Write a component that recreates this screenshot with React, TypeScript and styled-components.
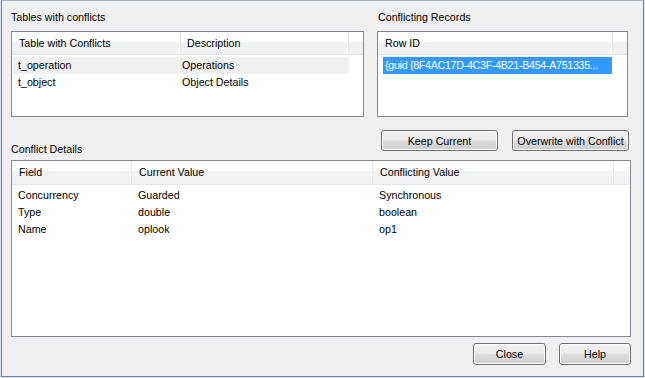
import styled, { createGlobalStyle } from "styled-components";

const GlobalStyle = createGlobalStyle`
  html, body {
    margin: 0;
    padding: 0;
    background: #dce7f5;
  }
  body {
    font-family: "Liberation Sans", Arial, sans-serif;
    font-size: 10.7px;
    color: #000;
  }
`;

const Frame = styled.div`
  width: 645px;
  height: 378px;
  padding: 0 1px 1px 1px;
  box-sizing: border-box;
`;

const Window = styled.div`
  width: 100%;
  height: 100%;
  box-sizing: border-box;
  background: #f0f0f0;
  border: 1px solid #6e7f98;
  border-top-color: #a9b3c2;
  padding: 10px 0 0 9px;
  display: flex;
  flex-direction: column;
`;

const TopRow = styled.div`
  display: flex;
  gap: 13px;
`;

const Group = styled.div<{ $w: number }>`
  width: ${(p) => p.$w}px;
  display: flex;
  flex-direction: column;
`;

const GroupLabel = styled.div<{ $indent?: number }>`
  height: 13px;
  line-height: 13px;
  margin-bottom: 7px;
  padding-left: ${(p) => p.$indent ?? 0}px;
  white-space: nowrap;
`;

const ListBox = styled.div<{ $w?: number; $h: number }>`
  width: ${(p) => (p.$w ? `${p.$w}px` : "100%")};
  height: ${(p) => p.$h}px;
  box-sizing: border-box;
  background: #fff;
  border: 1px solid #828790;
  overflow: hidden;
`;

const Header = styled.div<{ $h?: number }>`
  display: flex;
  height: ${(p) => p.$h ?? 22}px;
  background: linear-gradient(#ffffff 0%, #ffffff 45%, #f1f2f4 45%, #f1f2f4 100%);
  border-bottom: 1px solid #e5e5e5;
`;

const HeaderCell = styled.div<{ $w?: number; $pad?: number }>`
  ${(p) => (p.$w ? `width: ${p.$w}px; flex: none;` : "flex: 1;")}
  box-sizing: border-box;
  padding-left: ${(p) => p.$pad ?? 7}px;
  line-height: 23px;
  border-right: 1px solid #e5e5e5;
  box-shadow: inset -1px 0 0 #ffffff;
  white-space: nowrap;
  overflow: hidden;
  &:last-child {
    border-right: none;
    box-shadow: none;
  }
`;

const Body = styled.div<{ $top?: number }>`
  padding-top: ${(p) => p.$top ?? 2}px;
`;

const Row = styled.div<{ $tone?: "hover" | "selected"; $w?: number; $left?: number }>`
  display: flex;
  height: 17px;
  line-height: 17px;
  margin-left: ${(p) => p.$left ?? 1}px;
  width: ${(p) => (p.$w ? `${p.$w}px` : "auto")};
  background: ${(p) =>
    p.$tone === "hover" ? "#f0f0f0" : p.$tone === "selected" ? "#3399ff" : "transparent"};
  color: ${(p) => (p.$tone === "selected" ? "#fff" : "#000")};
`;

const Cell = styled.div<{ $w?: number; $pad?: number; $tight?: boolean }>`
  ${(p) => (p.$w ? `width: ${p.$w}px; flex: none;` : "flex: 1;")}
  box-sizing: border-box;
  padding-left: ${(p) => p.$pad ?? 5}px;
  letter-spacing: ${(p) => (p.$tight ? "-0.3px" : "normal")};
  white-space: nowrap;
  overflow: hidden;
`;

const MidRow = styled.div`
  display: flex;
  align-items: flex-start;
  height: 30px;
  margin-top: 13px;
  width: 618px;
`;

const MidLabel = styled.div`
  align-self: flex-end;
  line-height: 13px;
  padding-bottom: 4px;
  flex: 1;
`;

const ButtonBar = styled.div<{ $gap: number }>`
  display: flex;
  gap: ${(p) => p.$gap}px;
`;

const Button = styled.button<{ $w: number; $h: number }>`
  width: ${(p) => p.$w}px;
  height: ${(p) => p.$h}px;
  box-sizing: border-box;
  border: 1px solid #707070;
  border-radius: 3px;
  background: linear-gradient(#f2f2f2 0%, #ebebeb 48%, #dddddd 52%, #cfcfcf 100%);
  box-shadow: inset 0 0 0 1px #fcfcfc;
  font-family: "Liberation Sans", Arial, sans-serif;
  font-size: 10.7px;
  color: #000;
  padding: 0;
  cursor: default;
`;

const Footer = styled.div`
  display: flex;
  justify-content: flex-end;
  gap: 13px;
  margin-top: 6px;
  width: 620px;
`;

export default function App() {
  return (
    <>
      <GlobalStyle />
      <Frame>
        <Window>
          <TopRow>
            <Group $w={353}>
              <GroupLabel>Tables with conflicts</GroupLabel>
              <ListBox $h={86}>
                <Header>
                  <HeaderCell $w={169}>Table with Conflicts</HeaderCell>
                  <HeaderCell $w={168} $pad={6}>Description</HeaderCell>
                  <HeaderCell />
                </Header>
                <Body>
                  <Row $tone="hover" $w={336}>
                    <Cell $w={167} $pad={5}>t_operation</Cell>
                    <Cell $pad={2}>Operations</Cell>
                  </Row>
                  <Row>
                    <Cell $w={167} $pad={5}>t_object</Cell>
                    <Cell $pad={2}>Object Details</Cell>
                  </Row>
                </Body>
              </ListBox>
            </Group>
            <Group $w={251}>
              <GroupLabel $indent={1}>Conflicting Records</GroupLabel>
              <ListBox $h={86}>
                <Header>
                  <HeaderCell $w={235}>Row ID</HeaderCell>
                  <HeaderCell />
                </Header>
                <Body>
                  <Row $tone="selected" $w={229} $left={5}>
                    <Cell $pad={2} $tight>{"{guid {8F4AC17D-4C3F-4B21-B454-A751335..."}</Cell>
                  </Row>
                </Body>
              </ListBox>
            </Group>
          </TopRow>
          <MidRow>
            <MidLabel>Conflict Details</MidLabel>
            <ButtonBar $gap={14}>
              <Button $w={117} $h={21}>Keep Current</Button>
              <Button $w={117} $h={21}>Overwrite with Conflict</Button>
            </ButtonBar>
          </MidRow>
          <ListBox $w={620} $h={177}>
            <Header $h={23}>
              <HeaderCell $w={120}>Field</HeaderCell>
              <HeaderCell $w={241}>Current Value</HeaderCell>
              <HeaderCell $w={241}>Conflicting Value</HeaderCell>
              <HeaderCell />
            </Header>
            <Body>
              <Row>
                <Cell $w={120}>Concurrency</Cell>
                <Cell $w={241}>Guarded</Cell>
                <Cell>Synchronous</Cell>
              </Row>
              <Row>
                <Cell $w={120}>Type</Cell>
                <Cell $w={241}>double</Cell>
                <Cell>boolean</Cell>
              </Row>
              <Row>
                <Cell $w={120}>Name</Cell>
                <Cell $w={241}>oplook</Cell>
                <Cell>op1</Cell>
              </Row>
            </Body>
          </ListBox>
          <Footer>
            <Button $w={73} $h={22}>Close</Button>
            <Button $w={72} $h={22}>Help</Button>
          </Footer>
        </Window>
      </Frame>
    </>
  );
}
